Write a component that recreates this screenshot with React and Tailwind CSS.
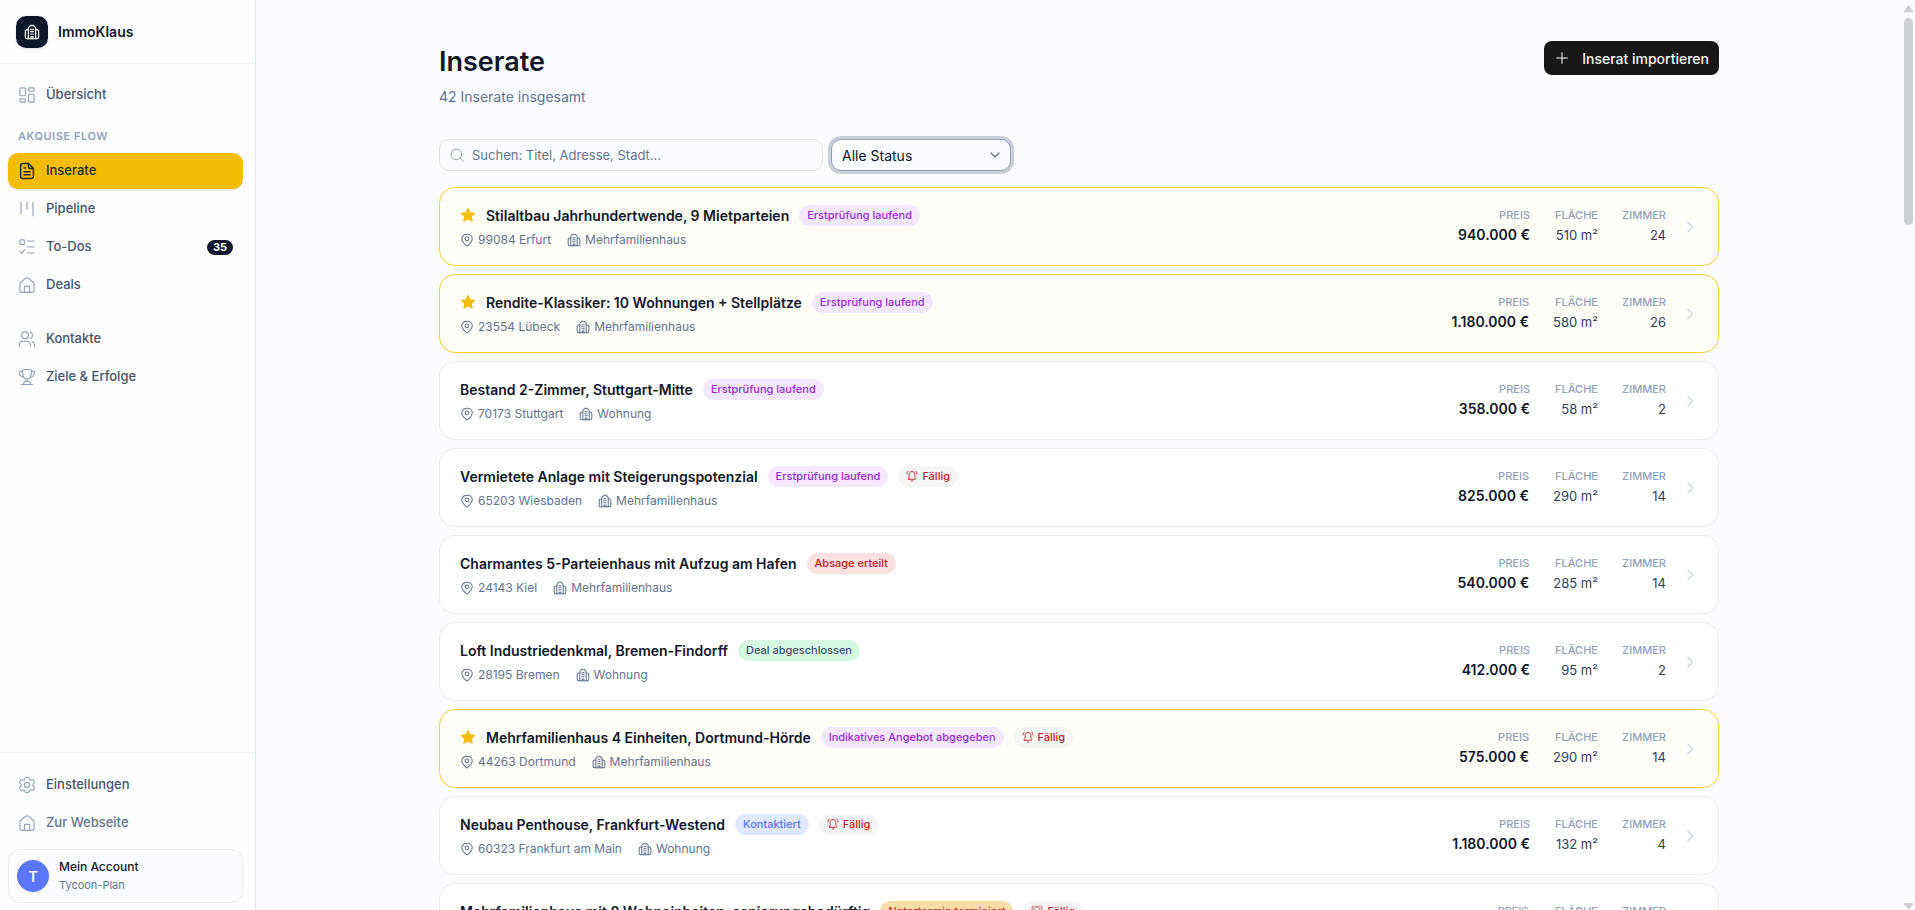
import React, { useState } from 'react';

const Icon = ({ children, className = 'size-[18px]', strokeWidth = 1.5 }) => (
  <svg
    viewBox="0 0 24 24"
    fill="none"
    stroke="currentColor"
    strokeWidth={strokeWidth}
    strokeLinecap="round"
    strokeLinejoin="round"
    className={`${className} shrink-0`}
    aria-hidden="true"
  >
    {children}
  </svg>
);

const BuildingIcon = (props) => (
  <Icon strokeWidth={1.8} {...props}>
    <path d="M6.500 22V6.500c0-1.500.5-2 1.500-2.300 1-.3 1-2.200 2.500-2.200h3c1.500 0 1.500 1.900 2.500 2.200 1 .3 1.500.8 1.500 2.300V22" />
    <path d="M6.500 8.500H5.200C3 8.500 2 9.500 2 11.500V19c0 2 .8 3 2.500 3h15c1.700 0 2.500-1 2.500-3v-7.500c0-2-1-3-3.200-3h-1.300" />
    <path d="M10 8h4M10 11.500h4M10 15h4M10.500 22v-3h3v3" />
  </Icon>
);

const DashboardIcon = () => (
  <Icon>
    <rect x="2.500" y="2.500" width="7.500" height="10.500" rx="1.200" />
    <rect x="2.500" y="17" width="7.500" height="4.500" rx="1.200" />
    <rect x="14" y="2.500" width="7.500" height="4.500" rx="1.200" />
    <rect x="14" y="11" width="7.500" height="10.500" rx="1.200" />
  </Icon>
);

const FileIcon = () => (
  <Icon strokeWidth={2}>
    <path d="M14 2H6.500C4.500 2 3.500 3 3.500 5v14c0 2 1 3 3 3h11c2 0 3-1 3-3V8.500z" />
    <path d="M14 2v4.500c0 1.300.7 2 2 2h4.500M8 8h2M8 13h8M8 17h8" />
  </Icon>
);

const PipelineIcon = () => (
  <Icon>
    <path d="M4 3v15M12 3v9M20 3v18" />
  </Icon>
);

const TodoIcon = () => (
  <Icon>
    <rect x="2.500" y="2.500" width="6" height="6" rx="1" />
    <path d="M2.500 18l2.500 2.500L9 15.500M12.500 4h9M12.500 12h9M12.500 20h9" />
  </Icon>
);

const HomeIcon = () => (
  <Icon>
    <path d="M2.500 11.500c0-1.700.5-2.500 1.700-3.500l5.300-4.600c1.700-1.500 3.300-1.500 5 0L19.800 8c1.200 1 1.700 1.800 1.700 3.500V19c0 2-.8 2.800-2.800 2.800H5.300c-2 0-2.800-.8-2.800-2.800z" />
    <path d="M8.500 21.500V15c0-.8.4-1.200 1.200-1.200h4.600c.8 0 1.200.4 1.200 1.200v6.500" />
  </Icon>
);

const UsersIcon = () => (
  <Icon>
    <circle cx="9.500" cy="7" r="4.500" />
    <path d="M2 21.500v-2c0-3 2-4.500 4.500-4.500h5.500c2.500 0 4.500 1.500 4.500 4.500v2M16.500 2.800a4.500 4.500 0 0 1 0 8.400M19 15.500c2 .7 3 2.200 3 4.500v1.500" />
  </Icon>
);

const TrophyIcon = () => (
  <Icon>
    <path d="M6 4c0-1.300.8-2 2-2h8c1.200 0 2 .7 2 2 0 7-2.500 11-6 11S6 11 6 4z" />
    <path d="M6 4.500H4c-1.300 0-2 .6-2 1.800C2 9.500 4 11.500 7 12M18 4.500h2c1.300 0 2 .6 2 1.800 0 3.200-2 5.200-5 5.700M12 15v2.500c-3 0-4.500 1.500-5 4.500h10c-.5-3-2-4.500-5-4.500M4.500 22h15" />
  </Icon>
);

const GearIcon = () => (
  <Icon>
    <path d="M21.300 7.100l-.5-.8c-.4-.7-.6-1-.9-1.200-.4-.1-.7 0-1.500.2l-1.200.3c-.7.200-1.400-.2-1.700-.8l-.5-1.200c-.300-.9-.500-1.200-.8-1.400-.3-.2-.6-.2-1.500-.2h-1.400c-.9 0-1.200 0-1.500.2-.3.200-.5.500-.8 1.400l-.5 1.200c-.3.600-1 1-1.700.8l-1.200-.3c-.8-.2-1.100-.3-1.500-.2-.3.200-.5.500-.9 1.200l-.5.800c-.4.700-.6 1-.6 1.400 0 .3.300.6.800 1.200l1 1.100c.4.500.4 1.900 0 2.400l-1 1.100c-.5.600-.8.900-.8 1.200 0 .4.200.7.600 1.400l.5.800c.4.700.6 1 .9 1.200.4.100.7 0 1.500-.2l1.200-.3c.7-.2 1.400.2 1.700.8l.5 1.200c.3.900.5 1.200.8 1.400.3.200.6.200 1.500.2h1.400c.9 0 1.200 0 1.500-.2.3-.2.5-.5.8-1.400l.5-1.200c.3-.6 1-1 1.700-.8l1.200.3c.8.200 1.100.3 1.500.2.3-.2.5-.5.9-1.200l.5-.8c.4-.7.6-1 .6-1.400 0-.3-.3-.6-.8-1.200l-1-1.100c-.4-.5-.4-1.900 0-2.400l1-1.100c.5-.6.8-.9.8-1.200 0-.4-.2-.7-.6-1.400z" />
    <circle cx="12" cy="12" r="3.500" />
  </Icon>
);

const PinIcon = () => (
  <Icon className="size-[14px]" strokeWidth={1.8}>
    <path d="M13.600 21.400c-.4.400-1 .6-1.600.6s-1.200-.2-1.600-.6C6.400 17.600 3 14.200 3 9.800 3 5.400 7 2 12 2s9 3.400 9 7.800c0 4.400-3.400 7.800-7.400 11.600z" />
    <circle cx="12" cy="10" r="3.200" />
  </Icon>
);

const BellIcon = () => (
  <Icon className="size-3" strokeWidth={1.8}>
    <path d="M5.500 18.500h13c1 0 1.400-1.100.8-1.900-1-1.200-1.600-2-1.600-4.600V9c0-3.500-2.500-6-5.700-6S6.300 5.500 6.300 9v3c0 2.600-.6 3.400-1.600 4.600-.6.800-.2 1.900.8 1.900zM10.500 22h3M22 8c0-2.500-.8-4.500-2.500-6M2 8c0-2.500.8-4.500 2.500-6" />
  </Icon>
);

const StarIcon = () => (
  <svg viewBox="0 0 24 24" className="size-4 shrink-0 text-[#f5bd02]" fill="currentColor" stroke="currentColor" strokeWidth="2" strokeLinejoin="round" aria-hidden="true">
    <path d="M12 2.500l2.900 6.200 6.800.8-5 4.700 1.300 6.800-6-3.400L6 21l1.300-6.800-5-4.700 6.800-.8z" />
  </svg>
);

const NavItem = ({ icon, label, active, muted, badge }) => (
  <a
    href="#"
    className={`flex h-9 items-center gap-2.5 rounded-[10px] px-2.5 text-[13px] font-medium ${
      active ? 'bg-[#f5bd02] text-slate-800 shadow-sm' : muted ? 'text-slate-500' : 'text-slate-600'
    }`}
  >
    <span className={active ? 'text-slate-800' : 'text-slate-400'}>{icon}</span>
    <span className="flex-1">{label}</span>
    {badge && (
      <span className="flex h-[15px] w-[26px] items-center justify-center rounded-full bg-slate-900 text-[11px] font-bold text-white">
        {badge}
      </span>
    )}
  </a>
);

const Sidebar = () => (
  <aside className="flex w-64 shrink-0 flex-col border-r border-slate-200 bg-[#fefefe]">
    <div className="flex h-16 items-center gap-2.5 border-b border-slate-100 px-4">
      <div className="flex size-8 items-center justify-center rounded-[10px] bg-slate-900 text-white shadow-sm">
        <BuildingIcon className="size-4" />
      </div>
      <span className="text-[14px] font-semibold text-slate-900">ImmoKlaus</span>
    </div>
    <nav className="flex flex-1 flex-col gap-0.5 pt-[13px] pr-3 pl-2">
      <NavItem icon={<DashboardIcon />} label="Übersicht" />
      <div className="mt-2.5 px-2.5 pb-1 text-[11px] leading-[22px] font-semibold tracking-wider text-slate-400 uppercase">
        Akquise Flow
      </div>
      <NavItem icon={<FileIcon />} label="Inserate" active />
      <NavItem icon={<PipelineIcon />} label="Pipeline" />
      <NavItem icon={<TodoIcon />} label="To-Dos" badge="35" />
      <NavItem icon={<HomeIcon />} label="Deals" />
      <div className="h-3.5"></div>
      <NavItem icon={<UsersIcon />} label="Kontakte" />
      <NavItem icon={<TrophyIcon />} label="Ziele & Erfolge" />
    </nav>
    <div className="flex flex-col gap-0.5 border-t border-slate-100 pt-3.5 pr-3 pb-[7px] pl-2">
      <NavItem icon={<GearIcon />} label="Einstellungen" />
      <NavItem icon={<HomeIcon />} label="Zur Webseite" muted />
      <button className="mt-1.5 flex items-center gap-2.5 rounded-xl border border-slate-200/70 bg-[#fbfcff] px-2 py-2 text-left">
        <span className="flex size-8 items-center justify-center rounded-full bg-[#5b76fe] text-[14px] font-semibold text-white">T</span>
        <span className="flex flex-col">
          <span className="text-[12px] leading-[18px] font-medium text-slate-900">Mein Account</span>
          <span className="text-[11px] leading-[18px] text-slate-500">Tycoon-Plan</span>
        </span>
      </button>
    </div>
  </aside>
);

const BADGES = {
  purple: 'bg-purple-100 text-[#9a2bd9]',
  red: 'bg-[#fde0e0] text-[#c01c26]',
  green: 'bg-[#d6f9e3] text-slate-600',
  blue: 'bg-[#dfe8ff] text-[#5b76fe]',
  orange: 'bg-[#f9dca6] text-[#c8372b]',
};

const LISTINGS = [
  { title: 'Stilaltbau Jahrhundertwende, 9 Mietparteien', status: 'Erstprüfung laufend', color: 'purple', place: '99084 Erfurt', type: 'Mehrfamilienhaus', price: '940.000 €', area: 510, rooms: 24, starred: true },
  { title: 'Rendite-Klassiker: 10 Wohnungen + Stellplätze', status: 'Erstprüfung laufend', color: 'purple', place: '23554 Lübeck', type: 'Mehrfamilienhaus', price: '1.180.000 €', area: 580, rooms: 26, starred: true },
  { title: 'Bestand 2-Zimmer, Stuttgart-Mitte', status: 'Erstprüfung laufend', color: 'purple', place: '70173 Stuttgart', type: 'Wohnung', price: '358.000 €', area: 58, rooms: 2 },
  { title: 'Vermietete Anlage mit Steigerungspotenzial', status: 'Erstprüfung laufend', color: 'purple', place: '65203 Wiesbaden', type: 'Mehrfamilienhaus', price: '825.000 €', area: 290, rooms: 14, due: true },
  { title: 'Charmantes 5-Parteienhaus mit Aufzug am Hafen', status: 'Absage erteilt', color: 'red', place: '24143 Kiel', type: 'Mehrfamilienhaus', price: '540.000 €', area: 285, rooms: 14 },
  { title: 'Loft Industriedenkmal, Bremen-Findorff', status: 'Deal abgeschlossen', color: 'green', place: '28195 Bremen', type: 'Wohnung', price: '412.000 €', area: 95, rooms: 2 },
  { title: 'Mehrfamilienhaus 4 Einheiten, Dortmund-Hörde', status: 'Indikatives Angebot abgegeben', color: 'purple', place: '44263 Dortmund', type: 'Mehrfamilienhaus', price: '575.000 €', area: 290, rooms: 14, starred: true, due: true },
  { title: 'Neubau Penthouse, Frankfurt-Westend', status: 'Kontaktiert', color: 'blue', place: '60323 Frankfurt am Main', type: 'Wohnung', price: '1.180.000 €', area: 132, rooms: 4, due: true },
  { title: 'Mehrfamilienhaus mit 8 Wohneinheiten, sanierungsbedürftig', status: 'Notartermin terminiert', color: 'orange', place: '04109 Leipzig', type: 'Mehrfamilienhaus', price: '890.000 €', area: 480, rooms: 20, due: true },
];

const Stat = ({ label, value, strong }) => (
  <div className="min-w-[44px] text-right">
    <div className="text-[11px] leading-5 font-medium text-slate-400 uppercase">{label}</div>
    <div className={`leading-5 ${strong ? 'text-[14px] font-semibold text-slate-900' : 'text-[13px] text-slate-700'}`}>{value}</div>
  </div>
);

const ListingCard = ({ item }) => (
  <a
    href="#"
    className={`flex items-center justify-between rounded-2xl border px-5 py-4 ${
      item.starred ? 'border-[#f7cf35] bg-[#fffdf8]' : 'border-slate-200/70 bg-white'
    }`}
  >
    <div>
      <div className="flex h-[22px] items-center gap-2.5">
        {item.starred && <StarIcon />}
        <h3 className="text-[14px] font-semibold text-slate-900">{item.title}</h3>
        <span className={`flex h-[21px] items-center rounded-full px-2 text-[11px] font-medium ${BADGES[item.color]}`}>
          {item.status}
        </span>
        {item.due && (
          <span className="flex h-[21px] items-center gap-1 rounded-full bg-stone-100 px-2 text-[11px] font-medium text-[#c01c26]">
            <BellIcon />
            Fällig
          </span>
        )}
      </div>
      <div className="mt-1 flex gap-4 text-[12px] leading-[19px] text-slate-500">
        <span className="flex items-center gap-1">
          <PinIcon />
          {item.place}
        </span>
        <span className="flex items-center gap-1">
          <BuildingIcon className="size-[14px]" />
          {item.type}
        </span>
      </div>
    </div>
    <div className="flex items-center gap-4">
      <div className="flex gap-6 pb-1">
        <Stat label="Preis" value={item.price} strong />
        <Stat label="Fläche" value={`${item.area} m²`} />
        <Stat label="Zimmer" value={item.rooms} />
      </div>
      <Icon className="size-4 text-slate-300" strokeWidth={2}>
        <path d="M9 5l7 7-7 7" />
      </Icon>
    </div>
  </a>
);

const App = () => {
  const [search, setSearch] = useState('');
  const [status, setStatus] = useState('all');

  return (
    <div className="flex h-screen overflow-hidden bg-[#fbfcff] font-['Inter',sans-serif]">
      <Sidebar />
      <main className="flex-1 overflow-hidden px-8 pt-[41px]">
        <div className="mx-auto max-w-7xl">
          <header className="flex items-start justify-between">
            <div>
              <h1 className="text-[27px] leading-[42px] font-semibold text-slate-900">Inserate</h1>
              <p className="mt-1 text-[14px] leading-5 text-slate-500">42 Inserate insgesamt</p>
            </div>
            <button className="flex h-[34px] items-center gap-3 rounded-lg bg-[#171717] px-2.5 text-[14px] font-medium text-slate-50">
              <Icon className="size-4">
                <path d="M12 4v16M4 12h16" />
              </Icon>
              Inserat importieren
            </button>
          </header>

          <div className="mt-8 flex gap-2">
            <label className="relative block w-96">
              <span className="absolute top-2 left-2.5 text-slate-400">
                <Icon className="size-4">
                  <circle cx="11" cy="11" r="8" />
                  <path d="M17 17l4.500 4.500" />
                </Icon>
              </span>
              <input
                type="text"
                aria-label="Suchen"
                value={search}
                onChange={(e) => setSearch(e.target.value)}
                placeholder="Suchen: Titel, Adresse, Stadt…"
                className="h-8 w-full rounded-[10px] border border-neutral-200 bg-transparent pr-3 pl-8 text-[13px] outline-none placeholder:text-slate-500"
              />
            </label>
            <label className="relative block w-[180px]">
              <select
                aria-label="Status"
                value={status}
                onChange={(e) => setStatus(e.target.value)}
                className="h-8 w-full appearance-none rounded-[10px] border border-slate-400 bg-[#fbfcff] pl-2.5 text-[14px] text-slate-900 ring-3 ring-[#cbced6] outline-none"
              >
                <option value="all">Alle Status</option>
              </select>
              <span className="pointer-events-none absolute top-2 right-2 text-slate-500">
                <Icon className="size-4" strokeWidth={2}>
                  <path d="M6 9l6 6 6-6" />
                </Icon>
              </span>
            </label>
          </div>

          <div className="mt-4 flex flex-col gap-2">
            {LISTINGS.map((item) => (
              <ListingCard key={item.title} item={item} />
            ))}
          </div>
        </div>
      </main>
      <div className="flex w-[13px] shrink-0 flex-col items-center text-[#cdd1d6]" aria-hidden="true">
        <svg viewBox="0 0 9 8" className="mt-[5px] h-2 w-[9px]" fill="currentColor">
          <path d="M4.500 0L9 6v1.500H0V6z" />
        </svg>
        <div className="mt-[5px] h-[207px] w-[9px] rounded-full bg-[#cdd1d6]"></div>
        <svg viewBox="0 0 9 8" className="mt-auto h-2 w-[9px]" fill="currentColor">
          <path d="M0 1h9v1.500L4.500 8 0 2.500z" />
        </svg>
      </div>
    </div>
  );
};

export default App;
